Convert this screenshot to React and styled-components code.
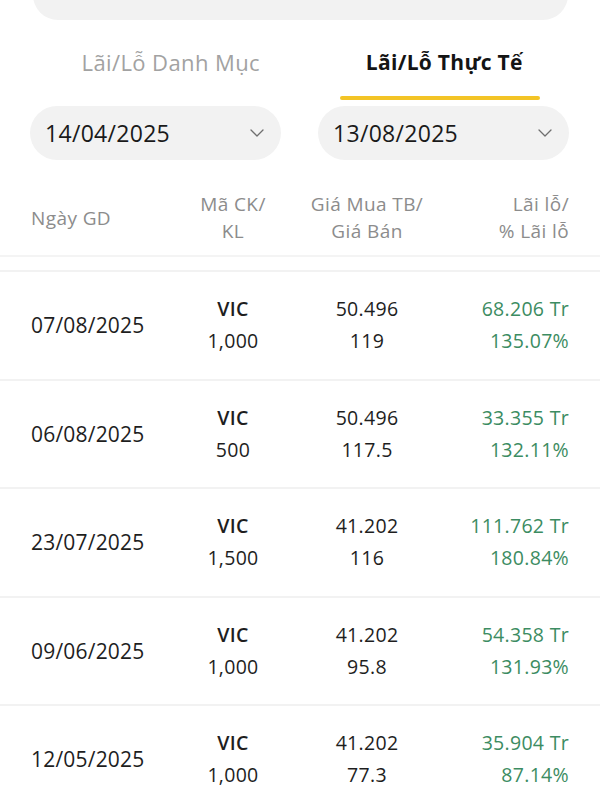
import styled, { createGlobalStyle } from 'styled-components';

const GlobalStyle = createGlobalStyle`
  * { box-sizing: border-box; }
  body {
    margin: 0;
    background: #fff;
    font-family: "Open Sans", "Noto Sans", sans-serif;
    color: #1c1c1c;
  }
`;

const trades = [
    { date: '07/08/2025', code: 'VIC', qty: '1,000', buy: '50.496', sell: '119', pnl: '68.206 Tr', pct: '135.07%' },
    { date: '06/08/2025', code: 'VIC', qty: '500', buy: '50.496', sell: '117.5', pnl: '33.355 Tr', pct: '132.11%' },
    { date: '23/07/2025', code: 'VIC', qty: '1,500', buy: '41.202', sell: '116', pnl: '111.762 Tr', pct: '180.84%' },
    { date: '09/06/2025', code: 'VIC', qty: '1,000', buy: '41.202', sell: '95.8', pnl: '54.358 Tr', pct: '131.93%' },
    { date: '12/05/2025', code: 'VIC', qty: '1,000', buy: '41.202', sell: '77.3', pnl: '35.904 Tr', pct: '87.14%' },
];

const SearchGlyph = () => (
    <svg width="24" height="24" viewBox="0 0 24 24" fill="none" stroke="#1a1a1a" strokeWidth="2" strokeLinecap="round">
        <circle cx="11" cy="11" r="8" />
        <line x1="21" y1="21" x2="16.65" y2="16.65" />
    </svg>
);

const Chevron = () => (
    <svg width="14" height="8" viewBox="0 0 14 8" fill="none" stroke="#6f6f6f" strokeWidth="1.3" strokeLinecap="round" strokeLinejoin="round">
        <polyline points="1,1 7,7 13,1" />
    </svg>
);

const App = () => {
    return (
        <Screen>
            <GlobalStyle />
            <SearchBar>
                <SearchIconSpan><SearchGlyph /></SearchIconSpan>
            </SearchBar>

            <Tabs>
                <Tab>
                    <TabLabel $offset={30}>Lãi/Lỗ Danh Mục</TabLabel>
                    <Underline />
                </Tab>
                <Tab>
                    <TabLabel $active>Lãi/Lỗ Thực Tế</TabLabel>
                    <Underline $active />
                </Tab>
            </Tabs>

            <Pickers>
                <DatePicker>
                    <span>14/04/2025</span>
                    <Chevron />
                </DatePicker>
                <DatePicker>
                    <span>13/08/2025</span>
                    <Chevron />
                </DatePicker>
            </Pickers>

            <HeaderRow>
                <HeadCell>Ngày GD</HeadCell>
                <HeadCell $align="center">Mã CK/<br />KL</HeadCell>
                <HeadCell $align="center">Giá Mua TB/<br />Giá Bán</HeadCell>
                <HeadCell $align="right">Lãi lỗ/<br />% Lãi lỗ</HeadCell>
            </HeaderRow>

            <List>
                {trades.map((t) => (
                    <Row key={t.date}>
                        <DateCell>{t.date}</DateCell>
                        <Cell $align="center">
                            <Code>{t.code}</Code>
                            <div>{t.qty}</div>
                        </Cell>
                        <Cell $align="center">
                            <div>{t.buy}</div>
                            <div>{t.sell}</div>
                        </Cell>
                        <Cell $align="right" $green>
                            <div>{t.pnl}</div>
                            <div>{t.pct}</div>
                        </Cell>
                    </Row>
                ))}
            </List>
        </Screen>
    );
};

export default App;

const Screen = styled.div`
  width: 600px;
  height: 800px;
  overflow: hidden;
`;

const SearchBar = styled.div`
  position: relative;
  height: 50px;
  margin: -30px 32px 0 33px;
  border-radius: 25px;
  background: #f2f2f2;
`;

const SearchIconSpan = styled.span`
  position: absolute;
  top: 8px;
  left: 56px;
  line-height: 0;
`;

const Tabs = styled.div`
  display: grid;
  grid-template-columns: 1fr 1fr;
  column-gap: 37px;
  padding: 0 30px;
  margin-top: 27px;
`;

const Tab = styled.div`
  display: flex;
  flex-direction: column;
  align-items: center;
`;

const TabLabel = styled.span`
  font-size: ${(props) => (props.$active ? 21 : 22)}px;
  line-height: 30px;
  letter-spacing: ${(props) => (props.$active ? 0.3 : 0.4)}px;
  font-weight: ${(props) => (props.$active ? 700 : 400)};
  color: ${(props) => (props.$active ? '#141414' : '#a2a2a2')};
  padding-left: ${(props) => props.$offset || 0}px;
`;

const Underline = styled.div`
  width: 200px;
  height: 4px;
  margin: 19px 8px 0 0;
  border-radius: 2px;
  background: ${(props) => (props.$active ? '#f3c426' : 'transparent')};
`;

const Pickers = styled.div`
  display: grid;
  grid-template-columns: 1fr 1fr;
  column-gap: 37px;
  padding: 0 31px 0 30px;
  margin-top: 6px;
`;

const DatePicker = styled.div`
  display: flex;
  align-items: center;
  justify-content: space-between;
  height: 54px;
  padding: 0 17px 0 15px;
  border-radius: 27px;
  background: #f2f2f2;
  font-size: 23px;
  letter-spacing: 0.3px;
  color: #1a1a1a;
`;

const HeaderRow = styled.div`
  display: grid;
  grid-template-columns: 140px 124px 144px 1fr;
  align-items: center;
  padding: 0 31px 10px;
  margin-top: 31px;
  border-bottom: 2px solid #f4f4f4;
`;

const HeadCell = styled.div`
  font-size: 19px;
  line-height: 27px;
  letter-spacing: 0.4px;
  color: #8c8c8c;
  text-align: ${(props) => props.$align || 'left'};
`;

const List = styled.div`
  margin-top: 13px;
  border-top: 2px solid #f2f2f2;
`;

const Row = styled.div`
  display: grid;
  grid-template-columns: 140px 124px 144px 1fr;
  align-items: center;
  height: 108.5px;
  padding: 0 31px;
  border-bottom: 2px solid #f2f2f2;
`;

const DateCell = styled.div`
  font-size: 21px;
  letter-spacing: 0.2px;
  color: #1e1e1e;
`;

const Cell = styled.div`
  font-size: 19.5px;
  line-height: 32px;
  letter-spacing: 0.3px;
  text-align: ${(props) => props.$align || 'left'};
  color: ${(props) => (props.$green ? '#3c8c62' : '#1e1e1e')};
`;

const Code = styled.div`
  font-weight: 600;
`;
